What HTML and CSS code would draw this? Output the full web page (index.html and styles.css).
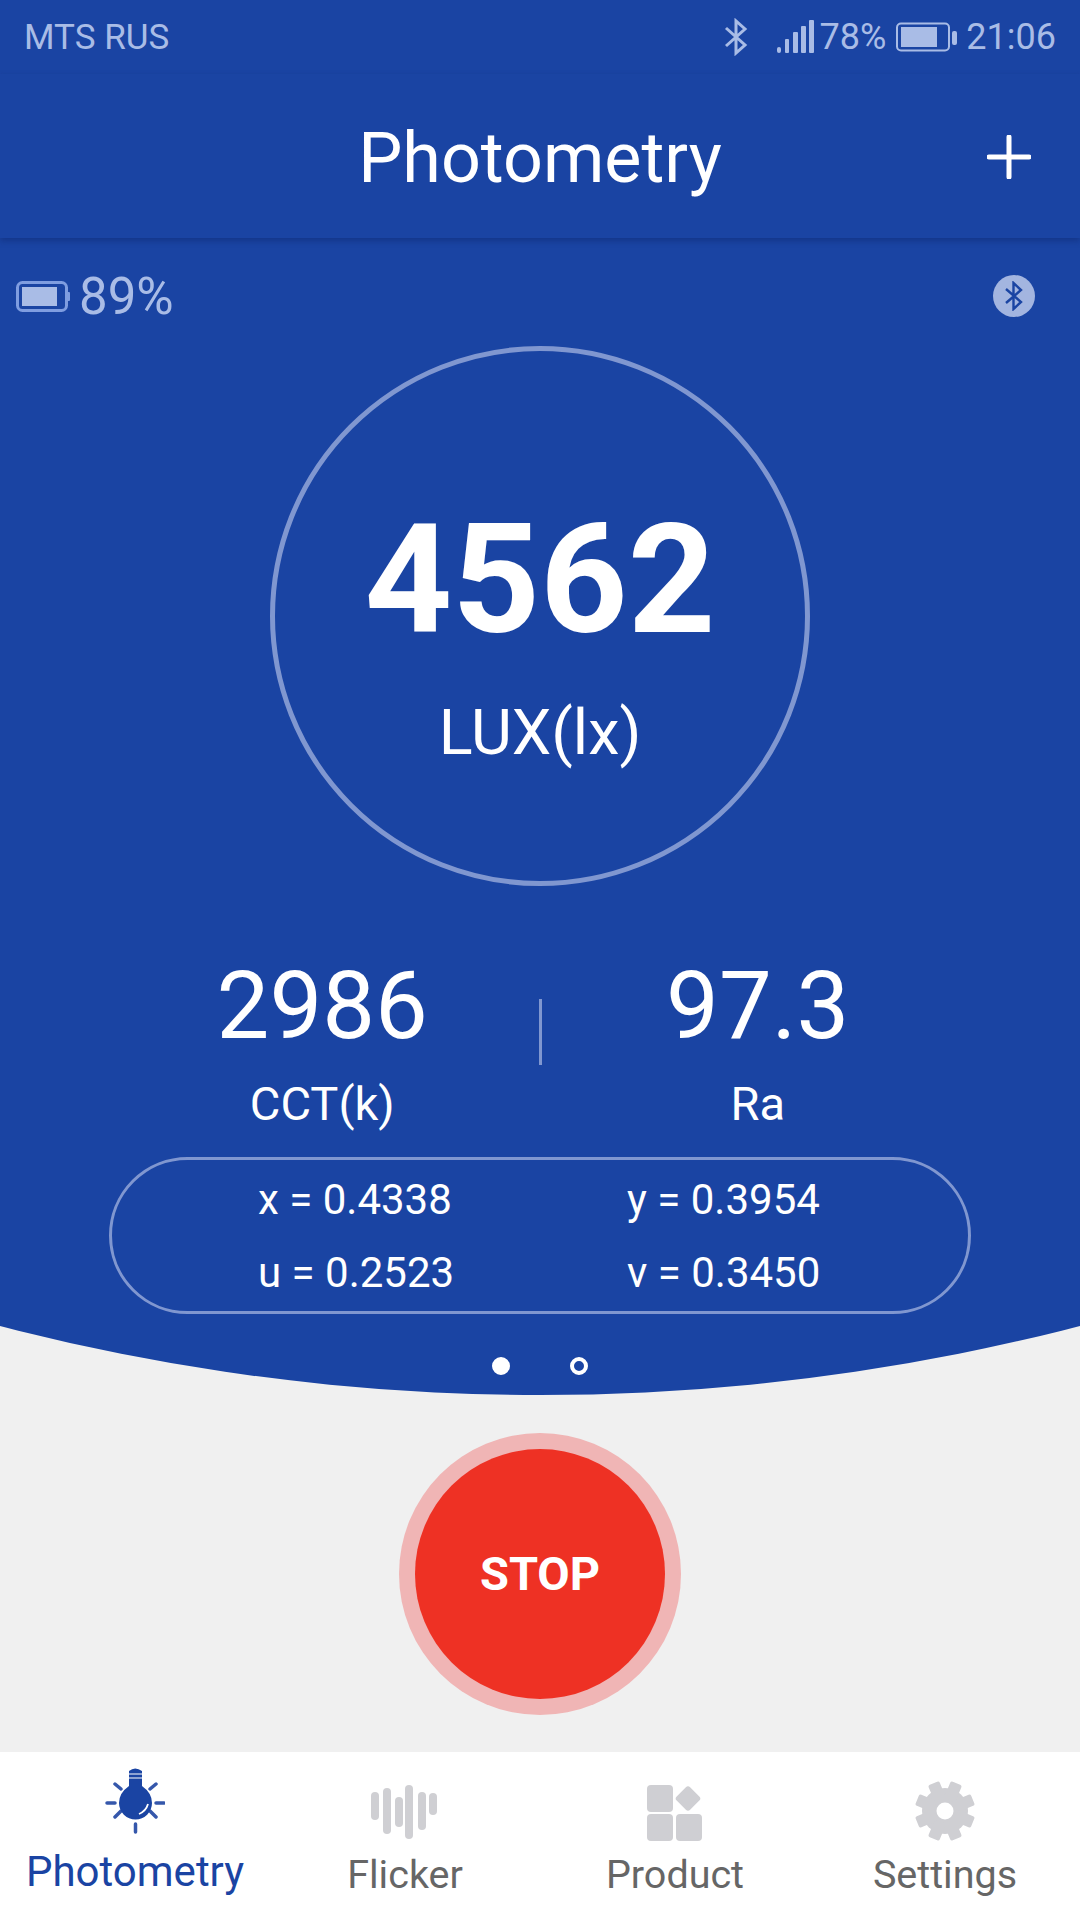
FILE: index.html
```html
<!DOCTYPE html>
<html lang="en">
<head>
  <meta charset="UTF-8">
  <meta name="viewport" content="width=device-width, initial-scale=1.0">
  <title>Photometry</title>
  <link rel="stylesheet" href="styles.css">
</head>
<body>

<div class="app">
  <div class="hero">
    <div class="status-bar">
      <span class="carrier">MTS RUS</span>
      <div class="status-right">
        <svg class="status-bt" width="26" height="38" viewBox="0 0 26 38">
          <path d="M3 10 L22 27 L13 35 V3 L22 11 L3 28" fill="none" stroke="#a9bce6" stroke-width="3"/>
        </svg>
        <svg class="status-signal" width="38" height="36" viewBox="0 0 38 36">
          <rect x="0" y="28" width="4" height="6" rx="2" fill="#a9bce6"/>
          <rect x="8" y="20" width="4" height="14" rx="1" fill="#a9bce6"/>
          <rect x="16" y="13" width="5" height="21" rx="1" fill="#a9bce6"/>
          <rect x="24" y="7" width="5" height="27" rx="1" fill="#a9bce6"/>
          <rect x="32" y="1" width="5" height="33" rx="1" fill="#a9bce6"/>
        </svg>
        <span class="status-pct">78%</span>
        <svg class="status-batt" width="62" height="30" viewBox="0 0 62 30">
          <rect x="1" y="1.5" width="52" height="27" rx="4" fill="none" stroke="#a9bce6" stroke-width="2"/>
          <rect x="5" y="5" width="36" height="20" fill="#a9bce6"/>
          <rect x="56" y="9" width="5" height="14" rx="2" fill="#a9bce6"/>
        </svg>
        <span class="status-time">21:06</span>
      </div>
    </div>

    <div class="header">
      <h1>Photometry</h1>
      <svg class="add-btn" width="44" height="44" viewBox="0 0 44 44">
        <path d="M22 2 V42 M2 22 H42" stroke="#fff" stroke-width="5" stroke-linecap="round"/>
      </svg>
    </div>

    <div class="device-row">
      <div class="device-batt">
        <svg width="54" height="31" viewBox="0 0 54 31">
          <rect x="1.5" y="1.5" width="49" height="28" rx="5" fill="none" stroke="#7f9de0" stroke-width="3"/>
          <rect x="6" y="6" width="35" height="19" fill="#a9bce6"/>
          <rect x="50" y="11" width="4" height="9" rx="1" fill="#7f9de0"/>
        </svg>
        <span>89%</span>
      </div>
      <div class="device-bt">
        <svg width="22" height="30" viewBox="0 0 22 30">
          <path d="M3 8 L18 21 L10.500 28 V2 L18 9 L3 22" fill="none" stroke="#1a44a3" stroke-width="2.400"/>
        </svg>
      </div>
    </div>

    <div class="gauge">
      <div class="gauge-value">4562</div>
      <div class="gauge-unit">LUX(lx)</div>
    </div>

    <div class="stats">
      <div class="stat">
        <div class="stat-value">2986</div>
        <div class="stat-label">CCT(k)</div>
      </div>
      <div class="stat-divider"></div>
      <div class="stat">
        <div class="stat-value">97.3</div>
        <div class="stat-label">Ra</div>
      </div>
    </div>

    <div class="coords">
      <span>x = 0.4338</span>
      <span>y = 0.3954</span>
      <span>u = 0.2523</span>
      <span>v = 0.3450</span>
    </div>

    <div class="dots">
      <span class="dot active"></span>
      <span class="dot"></span>
    </div>
  </div>

  <div class="action">
    <button class="stop-btn">STOP</button>
  </div>

  <div class="tabbar">
    <div class="tab active">
      <svg width="60" height="68" viewBox="0 0 60 68">
        <path d="M2 36 H10 M51 36 H59 M30.500 57 V65 M10 17 L16 22 M51 17 L45 22 M10 50 L16 44 M51 50 L45 44" stroke="#3557ab" stroke-width="3.500" stroke-linecap="round" fill="none"/>
        <path d="M24 4 Q30 -1 37 4 V19 Q47 26 47 36 A16.500 16.500 0 0 1 14 36 Q14 26 24 19 Z" fill="#1a44a3"/>
        <path d="M23 7 H38 M23 11 H38" stroke="#fff" stroke-width="1.200"/>
        <path d="M34 47 Q41 44 43 37" fill="none" stroke="#fff" stroke-width="1.800"/>
      </svg>
      <span class="tab-label">Photometry</span>
    </div>
    <div class="tab">
      <svg width="68" height="56" viewBox="0 0 68 56">
        <g fill="#cfcfd3">
          <rect x="0" y="7" width="8" height="28" rx="4"/>
          <rect x="12" y="3" width="8" height="46" rx="4"/>
          <rect x="24" y="12" width="8" height="30" rx="4"/>
          <rect x="34" y="0" width="8" height="54" rx="4"/>
          <rect x="47" y="7" width="8" height="38" rx="4"/>
          <rect x="58" y="8" width="8" height="22" rx="4"/>
        </g>
      </svg>
      <span class="tab-label">Flicker</span>
    </div>
    <div class="tab">
      <svg width="56" height="56" viewBox="0 0 56 56">
        <g fill="#cfcfd3">
          <rect x="0" y="0" width="26" height="27" rx="4"/>
          <rect x="31.500" y="4" width="19" height="19" rx="3" transform="rotate(45 41 13.500)"/>
          <rect x="0" y="29" width="26" height="27" rx="4"/>
          <rect x="29" y="29" width="26" height="27" rx="4"/>
        </g>
      </svg>
      <span class="tab-label">Product</span>
    </div>
    <div class="tab">
      <svg width="60" height="60" viewBox="0 0 60 60">
        <g fill="#cfcfd3">
          <circle cx="30" cy="30" r="23"/>
          <rect x="24" y="0" width="12" height="60" rx="2" transform="rotate(22.500 30 30)"/>
          <rect x="24" y="0" width="12" height="60" rx="2" transform="rotate(67.500 30 30)"/>
          <rect x="24" y="0" width="12" height="60" rx="2" transform="rotate(112.500 30 30)"/>
          <rect x="24" y="0" width="12" height="60" rx="2" transform="rotate(157.500 30 30)"/>
        </g>
        <circle cx="30" cy="30" r="8.500" fill="#fff"/>
      </svg>
      <span class="tab-label">Settings</span>
    </div>
  </div>
</div>

</body>
</html>
```

FILE: styles.css
```css
* {
  box-sizing: border-box;
}
body {
  margin: 0;
  font-family: Roboto, "Liberation Sans", sans-serif;
  background: #f0f0f0;
}
.app {
  width: 1080px;
  height: 1920px;
  display: flex;
  flex-direction: column;
  overflow: hidden;
}
.hero {
  height: 1395px;
  background: #1a44a3;
  color: #fff;
  display: flex;
  flex-direction: column;
  align-items: center;
  clip-path: circle(2147px at 540px -752px);
}
.status-bar {
  width: 100%;
  height: 74px;
  padding: 0 24px;
  display: flex;
  justify-content: space-between;
  align-items: center;
  color: #a9bce6;
  font-size: 36px;
}
.carrier {
  font-size: 35px;
}
.status-right {
  display: flex;
  align-items: center;
}
.status-bt {
  margin-right: 28px;
}
.status-signal {
  margin-right: 5px;
}
.status-batt {
  margin: 0 8px 0 10px;
}
.header {
  width: 100%;
  height: 164px;
  display: flex;
  align-items: center;
  justify-content: center;
  position: relative;
  box-shadow: 0 3px 6px rgba(10, 30, 90, 0.35);
}
.header h1 {
  margin: 4px 0 0;
  font-size: 70px;
  font-weight: 400;
}
.add-btn {
  position: absolute;
  right: 49px;
  top: 61px;
}
.device-row {
  width: 100%;
  height: 108px;
  padding: 8px 45px 0 16px;
  display: flex;
  justify-content: space-between;
  align-items: center;
}
.device-batt {
  display: flex;
  align-items: center;
  gap: 9px;
  color: #a9bce6;
  font-size: 51px;
}
.device-bt {
  width: 42px;
  height: 42px;
  border-radius: 50%;
  background: #a3b5e0;
  display: flex;
  align-items: center;
  justify-content: center;
}
.gauge {
  width: 540px;
  height: 540px;
  border: 5px solid #8097d0;
  border-radius: 50%;
  display: flex;
  flex-direction: column;
  align-items: center;
}
.gauge-value {
  margin-top: 152px;
  font-size: 153px;
  font-weight: 700;
  line-height: 1;
}
.gauge-unit {
  margin-top: 45px;
  font-size: 63px;
  line-height: 1;
}
.stats {
  margin-top: 70px;
  width: 868px;
  display: grid;
  grid-template-columns: 1fr 3px 1fr;
  align-items: center;
}
.stat {
  text-align: center;
}
.stat-value {
  font-size: 94px;
  line-height: 100px;
}
.stat-label {
  margin-top: 20px;
  font-size: 47px;
  line-height: 56px;
}
.stat-divider {
  height: 66px;
  margin-bottom: 24px;
  background: #8097d0;
}
.coords {
  margin-top: 25px;
  width: 862px;
  height: 157px;
  border: 3px solid #8097d0;
  border-radius: 79px;
  padding-left: 146px;
  display: grid;
  grid-template-columns: 369px auto;
  align-content: center;
  row-gap: 26px;
  font-size: 42px;
  line-height: 47px;
}
.dots {
  margin-top: 43px;
  display: flex;
  gap: 60px;
}
.dot {
  width: 18px;
  height: 18px;
  border: 4px solid #fff;
  border-radius: 50%;
}
.dot.active {
  background: #fff;
}
.action {
  flex: 1;
  display: flex;
  align-items: center;
  justify-content: center;
}
.stop-btn {
  width: 250px;
  height: 250px;
  border: none;
  border-radius: 50%;
  background: #ee3124;
  box-shadow: 0 0 0 16px #f0b5b5;
  color: #fff;
  font-family: inherit;
  font-size: 47px;
  font-weight: 700;
}
.tabbar {
  height: 168px;
  background: #fff;
  display: grid;
  grid-template-columns: repeat(4, 270px);
}
.tab {
  height: 100%;
  display: flex;
  flex-direction: column;
  align-items: center;
  justify-content: flex-end;
  padding-bottom: 21px;
  gap: 10px;
  color: #666;
}
.tab.active {
  padding-bottom: 24px;
  gap: 13px;
  color: #1a44a3;
}
.tab-label {
  font-size: 39.500px;
  line-height: 48px;
}
.tab.active .tab-label {
  font-size: 42px;
}
```
